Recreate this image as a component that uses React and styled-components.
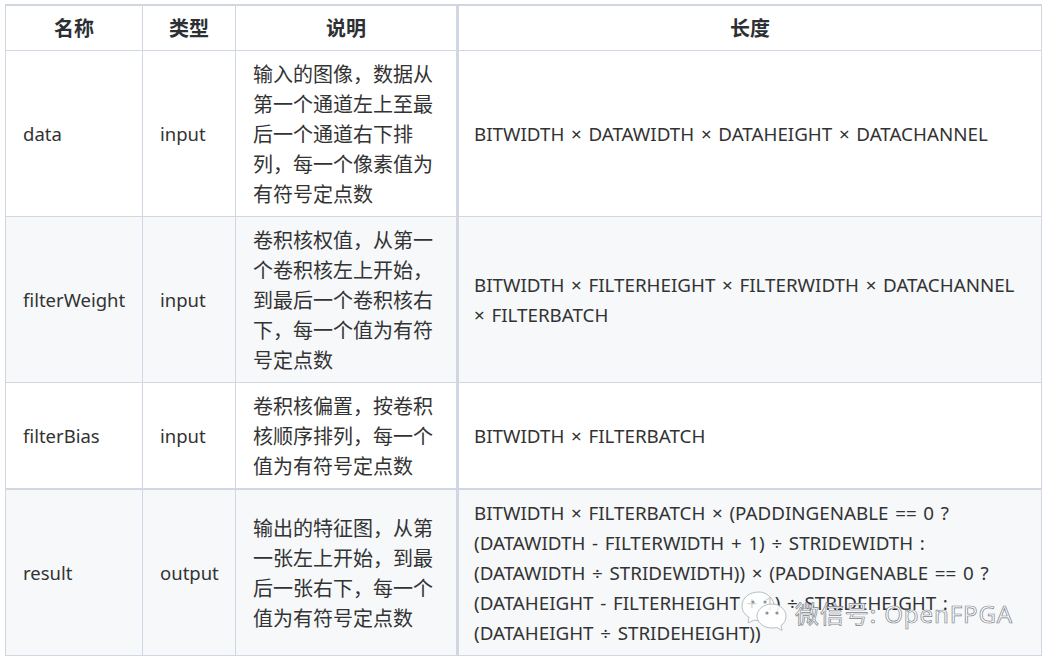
import React from 'react';
import styled, { createGlobalStyle } from 'styled-components';

const GlobalStyle = createGlobalStyle`
    html, body {
        margin: 0;
        padding: 0;
        background: #fff;
    }
`;

const rows = [
    {
        name: 'data',
        type: 'input',
        desc: '输入的图像，数据从第一个通道左上至最后一个通道右下排列，每一个像素值为有符号定点数',
        size: 'BITWIDTH × DATAWIDTH × DATAHEIGHT × DATACHANNEL',
    },
    {
        name: 'filterWeight',
        type: 'input',
        desc: '卷积核权值，从第一个卷积核左上开始，到最后一个卷积核右下，每一个值为有符号定点数',
        size: 'BITWIDTH × FILTERHEIGHT × FILTERWIDTH × DATACHANNEL × FILTERBATCH',
    },
    {
        name: 'filterBias',
        type: 'input',
        desc: '卷积核偏置，按卷积核顺序排列，每一个值为有符号定点数',
        size: 'BITWIDTH × FILTERBATCH',
    },
    {
        name: 'result',
        type: 'output',
        desc: '输出的特征图，从第一张左上开始，到最后一张右下，每一个值为有符号定点数',
        size: 'BITWIDTH × FILTERBATCH × (PADDINGENABLE == 0 ? (DATAWIDTH - FILTERWIDTH + 1) ÷ STRIDEWIDTH : (DATAWIDTH ÷ STRIDEWIDTH)) × (PADDINGENABLE == 0 ? (DATAHEIGHT - FILTERHEIGHT + 1) ÷ STRIDEHEIGHT : (DATAHEIGHT ÷ STRIDEHEIGHT))',
    },
];

const App = () => (
    <Page>
        <GlobalStyle />
        <Table>
            <colgroup>
                <Col $w={137} />
                <Col $w={93} />
                <Col $w={222} />
                <Col $w={584} />
            </colgroup>
            <thead>
                <tr>
                    <Head>名称</Head>
                    <Head>类型</Head>
                    <Head>说明</Head>
                    <Head>长度</Head>
                </tr>
            </thead>
            <tbody>
                {rows.map((row) => (
                    <Row key={row.name}>
                        <Cell>{row.name}</Cell>
                        <Cell>{row.type}</Cell>
                        <Cell>{row.desc}</Cell>
                        <Cell>{row.size}</Cell>
                    </Row>
                ))}
            </tbody>
        </Table>
        <Watermark>
            <svg width="46" height="42" viewBox="0 0 46 42" fill="none">
                <path
                    d="M18 1C8 1 1 7 1 15c0 5 3 9 7 11l-1 6 6-3c2 .5 4 .7 6 .6C24 25 27 14 33 13 31 6 25 1 18 1z"
                    stroke="#b9bdc4"
                    strokeWidth="1"
                    fill="rgba(255,255,255,.8)"
                />
                <circle cx="12" cy="11" r="1.600" fill="#8b97a5" />
                <circle cx="24" cy="11" r="1.600" fill="#8b97a5" />
                <path
                    d="M31 13c-9 0-15 6-15 12s6 12 15 12c2 0 3 0 5-.5l5 3-1-5c3-2 5-5 5-9.500 0-6-6-12-14-12z"
                    stroke="#b9bdc4"
                    strokeWidth="1"
                    fill="rgba(255,255,255,.92)"
                />
                <circle cx="26" cy="22" r="1.600" fill="#8b909a" />
                <circle cx="36" cy="22" r="1.600" fill="#8b909a" />
            </svg>
            <Mark>微信号: OpenFPGA</Mark>
        </Watermark>
    </Page>
);

export default App;

const Page = styled.div`
    position: relative;
    width: 1047px;
    height: 661px;
    overflow: hidden;
    padding: 4px 0 0 5px;
    box-sizing: border-box;
    background: #fff;
`;

const Table = styled.table`
    width: 1036px;
    table-layout: fixed;
    border-collapse: collapse;
    font-family: 'Noto Sans', 'Noto Sans CJK SC', sans-serif;
    font-size: 18.5px;
    color: #333;
    border-top: 2px solid #d0d7e2;
    th:nth-child(3),
    td:nth-child(3) {
        border-right: 3px solid #d0d7e2;
    }
`;

const Col = styled.col`
    width: ${(p) => p.$w}px;
`;

const Head = styled.th`
    height: 42px;
    padding: 0 0 2px;
    border: 1px solid #d0d7e2;
    font-size: 20px;
    font-weight: 700;
    text-align: center;
    color: #2c2f33;
`;

const Row = styled.tr`
    &:nth-child(even) {
        background: #f6f8fa;
    }
    &:last-child td {
        border-top: 2px solid #d0d7e2;
    }
`;

const Cell = styled.td`
    padding: 8px 17px 7px;
    border: 1px solid #d0d7e2;
    line-height: 30px;
    white-space: nowrap;
    &:nth-child(3) {
        font-size: 20px;
        white-space: normal;
        padding-top: 9px;
        padding-bottom: 6px;
    }
    &:nth-child(4) {
        padding-left: 15px;
        font-size: 18.8px;
        word-spacing: 1.8px;
        white-space: normal;
    }
`;

const Watermark = styled.div`
    position: absolute;
    left: 741px;
    top: 591px;
    display: flex;
    align-items: center;
    gap: 8px;
`;

const Mark = styled.span`
    font-family: 'Noto Sans', 'Noto Sans CJK SC', sans-serif;
    font-size: 24px;
    color: #fff;
    -webkit-text-stroke: 0.7px #7f848c;
    letter-spacing: 0.9px;
`;
